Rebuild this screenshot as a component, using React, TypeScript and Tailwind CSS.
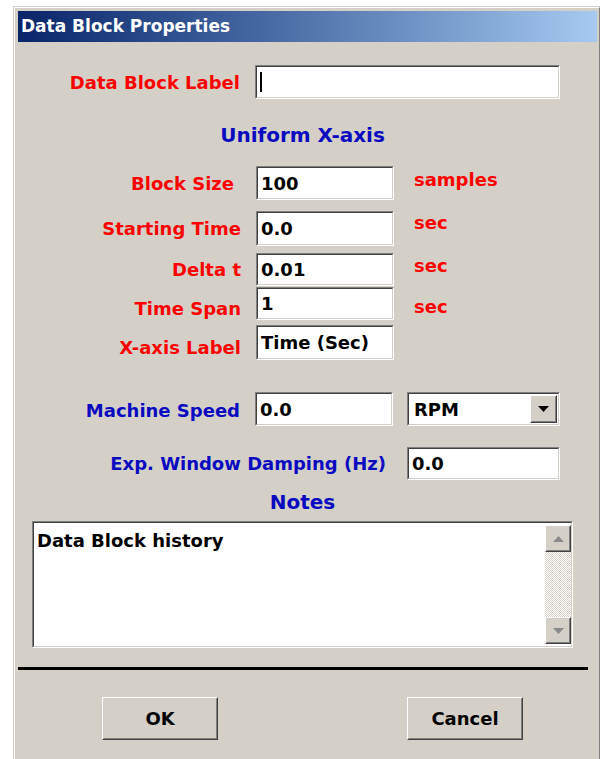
import React from "react";

// Classic 3D bevels used by fields and buttons
function Sunken({ className = "", children }: { className?: string; children?: React.ReactNode }) {
  return (
    <div className={"border border-t-[#808080] border-l-[#808080] border-b-white border-r-white " + className}>
      <div className="h-full w-full border border-t-[#404040] border-l-[#404040] border-b-[#d4d0c8] border-r-[#d4d0c8] bg-white flex items-center">
        {children}
      </div>
    </div>
  );
}

function Raised({ className = "", children }: { className?: string; children?: React.ReactNode }) {
  return (
    <div className={"border border-t-white border-l-white border-b-[#404040] border-r-[#404040] bg-[#d4d0c8] " + className}>
      <div className="h-full w-full border border-t-[#d4d0c8] border-l-[#d4d0c8] border-b-[#808080] border-r-[#808080] flex items-center justify-center">
        {children}
      </div>
    </div>
  );
}

function Arrow({ dir, color }: { dir: "up" | "down"; color: string }) {
  return (
    <svg width="11" height="6" viewBox="0 0 11 6">
      {dir === "up" ? <polygon points="5.5,0 11,6 0,6" fill={color} /> : <polygon points="0,0 11,0 5.5,6" fill={color} />}
    </svg>
  );
}

const red = "text-[#ff0000]";
const blue = "text-[#0a0ac0]";

function FieldRow({
  label,
  value,
  unit,
  mt,
  h,
  labelPad = "",
  unitPad = "",
}: {
  label: string;
  value: string;
  unit?: string;
  mt: string;
  h: string;
  labelPad?: string;
  unitPad?: string;
}) {
  return (
    <div className={"flex items-center " + mt + " " + h}>
      <div className={"w-[238px] text-right pr-[15px] " + red + " " + labelPad}>{label}</div>
      <Sunken className="w-[138px] h-full">
        <span className="pl-[3px]">{value}</span>
      </Sunken>
      {unit && <div className={"ml-[20px] " + red + " " + unitPad}>{unit}</div>}
    </div>
  );
}

export default function App() {
  return (
    <div className="w-[600px] h-[759px] bg-white overflow-hidden font-['DejaVu_Sans',sans-serif] font-bold text-[18px] text-black">
      <div className="ml-[13px] mt-[6px] w-[588px] h-[760px] border border-[#d4d0c8] border-r-[#404040]">
        <div className="h-full border border-white border-r-[#808080] bg-[#d4d0c8] pt-[3px] pl-[3px] pr-[2px]">
          {/* title bar */}
          <div className="h-[31px] flex items-center pl-[3px] bg-gradient-to-r from-[#0a246a] to-[#a6caf0] text-white text-[17px]">
            Data Block Properties
          </div>

          <div className="flex flex-col">
            {/* label */}
            <div className="flex items-center mt-[23px] h-[34px]">
              <div className={"w-[237px] text-right pr-[15px] " + red}>Data Block Label</div>
              <Sunken className="w-[305px] h-full">
                <span className="ml-[3px] w-[2px] h-[20px] bg-black" />
              </Sunken>
            </div>

            <div className={"mt-[24px] h-[24px] leading-[24px] text-center text-[20px] pr-[10px] " + blue}>Uniform X-axis</div>

            <FieldRow label="Block Size" value="100" unit="samples" mt="mt-[19px]" h="h-[34px]" labelPad="pr-[22px]" unitPad="pb-[8px]" />
            <FieldRow label="Starting Time" value="0.0" unit="sec" mt="mt-[11px]" h="h-[35px]" unitPad="pb-[13px]" />
            <FieldRow label="Delta t" value="0.01" unit="sec" mt="mt-[7px]" h="h-[33px]" unitPad="pb-[9px]" />
            <FieldRow label="Time Span" value="1" unit="sec" mt="mt-[1px]" h="h-[33px]" labelPad="pt-[9px]" unitPad="pt-[5px]" />
            <FieldRow label="X-axis Label" value="Time (Sec)" mt="mt-[5px]" h="h-[35px]" labelPad="pt-[9px]" />

            {/* machine speed + units */}
            <div className="flex items-center mt-[32px] h-[34px]">
              <div className={"w-[237px] text-right pr-[15px] pt-[3px] " + blue}>Machine Speed</div>
              <Sunken className="w-[138px] h-full">
                <span className="pl-[3px]">0.0</span>
              </Sunken>
              <Sunken className="ml-[14px] w-[153px] h-full">
                <div className="flex-1 pl-[5px]">RPM</div>
                <Raised className="w-[27px] h-[28px] mr-[1px]">
                  <Arrow dir="down" color="#000" />
                </Raised>
              </Sunken>
            </div>

            <div className="flex items-center mt-[21px] h-[33px]">
              <div className={"w-[389px] text-right pr-[21px] " + blue}>Exp. Window Damping (Hz)</div>
              <Sunken className="w-[153px] h-full">
                <span className="pl-[3px]">0.0</span>
              </Sunken>
            </div>

            <div className={"mt-[10px] h-[24px] leading-[24px] text-center text-[20px] pr-[10px] " + blue}>Notes</div>

            {/* notes box */}
            <Sunken className="mt-[7px] ml-[14px] w-[541px] h-[127px]">
              <div className="flex-1 self-stretch pl-[3px] pt-[4px]">Data Block history</div>
              <div className="w-[26px] self-stretch flex flex-col py-[2px]">
                <Raised className="h-[27px]">
                  <Arrow dir="up" color="#8a8a8a" />
                </Raised>
                <div className="flex-1 bg-[repeating-conic-gradient(#d4d0c8_0%_25%,#ffffff_0%_50%)] bg-size-[2px_2px]" />
                <Raised className="h-[27px]">
                  <Arrow dir="down" color="#8a8a8a" />
                </Raised>
              </div>
            </Sunken>

            <div className="mt-[19px] h-[3px] w-[570px] bg-black" />

            <div className="mt-[27px] flex">
              <Raised className="ml-[84px] w-[116px] h-[43px]">OK</Raised>
              <Raised className="ml-[189px] w-[116px] h-[43px]">Cancel</Raised>
            </div>
          </div>
        </div>
      </div>
    </div>
  );
}
